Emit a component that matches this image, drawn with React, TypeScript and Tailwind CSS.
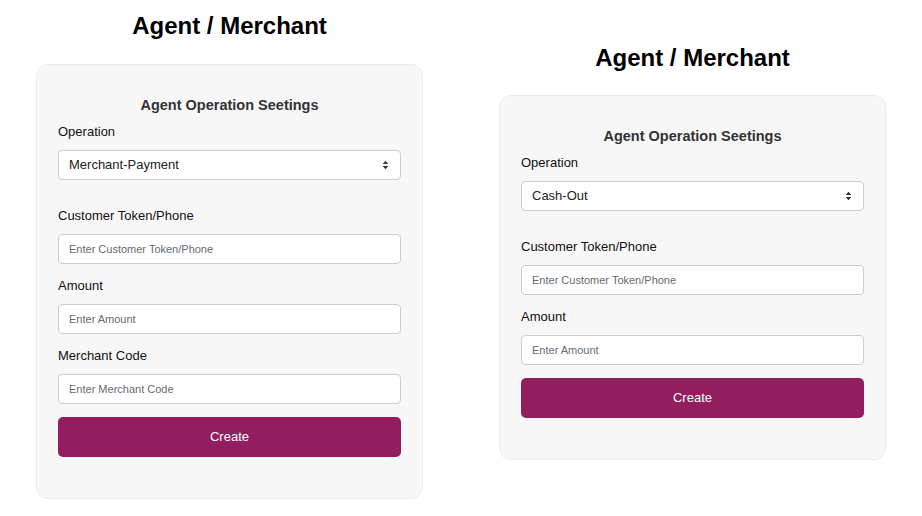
import { ReactNode } from 'react'

type Field = {
  label: string
  placeholder: string
}

interface PanelProps {
  operation: string
  fields: Field[]
  topPad: string
  titleGap: string
}

function SelectArrows() {
  return (
    <svg
      className="pointer-events-none absolute right-[12px] top-1/2 -translate-y-1/2"
      width="7"
      height="10"
      viewBox="0 0 7 10"
      aria-hidden="true"
    >
      <path d="M3.5 0.8 L6.3 4 L0.7 4 Z" fill="#333" />
      <path d="M3.5 9.2 L6.3 6 L0.7 6 Z" fill="#333" />
    </svg>
  )
}

function Label({ children }: { children: ReactNode }) {
  return <label className="mb-2 block text-[13px] leading-[20px] text-[#111]">{children}</label>
}

function Panel({ operation, fields, topPad, titleGap }: PanelProps) {
  return (
    <div className={`flex w-[387px] flex-col items-center ${topPad}`}>
      <h1 className={`text-[24px] font-bold leading-[28px] text-black ${titleGap}`}>
        Agent / Merchant
      </h1>
      <div className="w-[387px] rounded-[12px] border border-[#ebebeb] bg-[#f7f7f7] px-[21px] pb-[41px] pt-[31px]">
        <h2 className="text-center text-[14.5px] font-bold leading-[18px] text-[#333]">
          Agent Operation Seetings
        </h2>
        <div className="mt-2 mb-[26px]">
          <Label>Operation</Label>
          <div className="relative">
            <select
              defaultValue={operation}
              className="h-[30px] w-full appearance-none rounded-[4px] border border-[#c9cdd3] bg-white pl-[10px] pr-8 text-[13px] text-[#222] outline-none"
            >
              <option>{operation}</option>
            </select>
            <SelectArrows />
          </div>
        </div>
        {fields.map((f) => (
          <div key={f.label} className="mb-[12px]">
            <Label>{f.label}</Label>
            <input
              type="text"
              placeholder={f.placeholder}
              className="h-[30px] w-full rounded-[4px] border border-[#c9cdd3] bg-white px-[10px] text-[11px] text-[#222] outline-none placeholder:text-[#666a70]"
            />
          </div>
        ))}
        <button className="mt-px h-[40px] w-full rounded-[5px] bg-[#921e5f] text-[13px] text-white">
          Create
        </button>
      </div>
    </div>
  )
}

export default function App() {
  return (
    <div
      className="flex h-[516px] w-[922px] items-start justify-center gap-[76px] bg-white"
      style={{ fontFamily: '"Liberation Sans", Arial, sans-serif' }}
    >
      <Panel
        operation="Merchant-Payment"
        topPad="pt-[12px]"
        titleGap="mb-[24px]"
        fields={[
          { label: 'Customer Token/Phone', placeholder: 'Enter Customer Token/Phone' },
          { label: 'Amount', placeholder: 'Enter Amount' },
          { label: 'Merchant Code', placeholder: 'Enter Merchant Code' },
        ]}
      />
      <Panel
        operation="Cash-Out"
        topPad="pt-[44px]"
        titleGap="mb-[23px]"
        fields={[
          { label: 'Customer Token/Phone', placeholder: 'Enter Customer Token/Phone' },
          { label: 'Amount', placeholder: 'Enter Amount' },
        ]}
      />
    </div>
  )
}
